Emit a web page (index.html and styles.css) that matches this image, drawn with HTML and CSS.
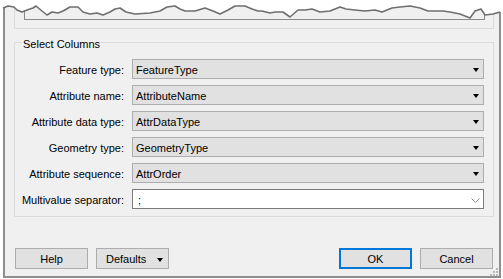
FILE: index.html
```html
<!DOCTYPE html>
<html>
<head>
<meta charset="utf-8">
<link rel="stylesheet" href="styles.css">
</head>
<body>
<div class="window">
  <div class="prev"><div class="prev-inner"></div></div>
  <div class="group">
    <div class="group-title">Select Columns</div>
    <div class="fields">
      <div class="lbl">Feature type:</div>
      <div class="combo"><span class="val">FeatureType</span><span class="arrow"></span></div>
      <div class="lbl">Attribute name:</div>
      <div class="combo"><span class="val">AttributeName</span><span class="arrow"></span></div>
      <div class="lbl">Attribute data type:</div>
      <div class="combo"><span class="val">AttrDataType</span><span class="arrow"></span></div>
      <div class="lbl">Geometry type:</div>
      <div class="combo"><span class="val">GeometryType</span><span class="arrow"></span></div>
      <div class="lbl">Attribute sequence:</div>
      <div class="combo"><span class="val">AttrOrder</span><span class="arrow"></span></div>
      <div class="lbl">Multivalue separator:</div>
      <div class="combo edit"><span class="val">;</span>
        <svg class="chev" width="9" height="5" viewBox="0 0 9 5"><path d="M0.5 0.5 L4.5 4.5 L8.5 0.5" fill="none" stroke="#8a8a8a" stroke-width="1"/></svg>
      </div>
    </div>
  </div>
  <div class="buttons">
    <button class="btn">Help</button>
    <button class="btn split"><span>Defaults</span><span class="arrow"></span></button>
    <div class="spacer"></div>
    <button class="btn default">OK</button>
    <button class="btn">Cancel</button>
  </div>
  <svg class="grip" width="9" height="9" viewBox="0 0 9 9">
    <rect x="7" y="1" width="2" height="2" fill="#b8b8b8"/>
    <rect x="4" y="4" width="2" height="2" fill="#b8b8b8"/>
    <rect x="7" y="4" width="2" height="2" fill="#b8b8b8"/>
    <rect x="1" y="7" width="2" height="2" fill="#b8b8b8"/>
    <rect x="4" y="7" width="2" height="2" fill="#b8b8b8"/>
    <rect x="7" y="7" width="2" height="2" fill="#b8b8b8"/>
  </svg>
</div>
<svg class="torn" width="503" height="24" viewBox="0 0 503 24">
  <path d="M0 0 L503 0 L503 12 L500 12 L493 14 L485 15 L481 9 L475 11 L470 18 L460 14 L450 12 L443 11 L435 11 L428 11 L420 8 L410 6 L400 7 L392 8 L382 12 L375 10 L365 11 L355 10 L346 9 L340 7 L330 11 L320 12 L312 9 L305 10 L298 10 L290 17 L283 12 L275 12 L270 13 L262 11 L258 11 L252 9 L245 6 L235 6 L228 10 L220 14 L213 11 L205 8 L195 11 L185 11 L180 9 L175 6 L167 7 L160 11 L150 13 L135 14 L126 12 L120 8 L115 9 L110 12 L103 15 L97 13 L90 14 L83 12 L78 7 L70 7 L63 11 L58 13 L52 12 L47 15 L42 11 L36 6 L33 8 L27 10 L22 12 L17 10 L14 7 L8 6 L3 8 L0 8 Z" fill="#ffffff"/>
  <path d="M3 8 L8 6 L14 7 L17 10 L22 12 L27 10 L33 8 L36 6 L42 11 L47 15 L52 12 L58 13 L63 11 L70 7 L78 7 L83 12 L90 14 L97 13 L103 15 L110 12 L115 9 L120 8 L126 12 L135 14 L150 13 L160 11 L167 7 L175 6 L180 9 L185 11 L195 11 L205 8 L213 11 L220 14 L228 10 L235 6 L245 6 L252 9 L258 11 L262 11 L270 13 L275 12 L283 12 L290 17 L298 10 L305 10 L312 9 L320 12 L330 11 L340 7 L346 9 L355 10 L365 11 L375 10 L382 12 L392 8 L400 7 L410 6 L420 8 L428 11 L435 11 L443 11 L450 12 L460 14 L470 18 L475 11 L481 9 L485 15 L493 14 L500 12" fill="none" stroke="#6f6f6f" stroke-width="1.6" stroke-linejoin="round"/>
</svg>
</body>
</html>
```
FILE: styles.css
```css
html, body {
  margin: 0;
  padding: 0;
  background: #ffffff;
}
body {
  position: relative;
  width: 503px;
  height: 279px;
  overflow: hidden;
  font-family: "Liberation Sans", Arial, sans-serif;
  font-size: 11px;
  color: #000;
}
.window {
  position: relative;
  box-sizing: border-box;
  margin-left: 3px;
  width: 498px;
  height: 278px;
  background: #f0f0f0;
  border-left: 2px solid #8e8e8e;
  border-right: 2px solid #8e8e8e;
  border-bottom: 2px solid #8e8e8e;
  display: flex;
  flex-direction: column;
}
.prev {
  margin: 0 5px 0 9px;
  height: 28px;
  border-left: 1px solid #dcdcdc;
  border-right: 1px solid #dcdcdc;
  border-bottom: 1px solid #dcdcdc;
  flex: none;
}
.prev-inner {
  margin: 0 8px 0 9px;
  height: 19px;
  border-left: 1px solid #8a8a8a;
  border-right: 1px solid #8a8a8a;
  border-bottom: 1px solid #8a8a8a;
}
.group {
  margin: 13px 5px 0 9px;
  border: 1px solid #dcdcdc;
  padding: 0 9px 7px 0;
  flex: none;
}
.group-title {
  margin: -5px 0 0 7px;
  padding: 0 1px;
  width: fit-content;
  background: #f0f0f0;
  line-height: 13px;
  height: 13px;
}
.fields {
  margin-top: 8px;
  display: grid;
  grid-template-columns: 109px 1fr;
  column-gap: 8px;
  row-gap: 6px;
  grid-auto-rows: 20px;
}
.lbl {
  text-align: right;
  white-space: nowrap;
  line-height: 18px;
  padding-top: 2px;
}
.combo {
  box-sizing: border-box;
  height: 20px;
  border: 1px solid #adadad;
  background: #e1e1e1;
  display: flex;
  align-items: center;
  padding: 0 4px 0 3px;
}
.combo .val {
  flex: 1;
  line-height: 16px;
  padding-top: 2px;
}
.arrow {
  width: 0;
  height: 0;
  border-left: 3.5px solid transparent;
  border-right: 3.5px solid transparent;
  border-top: 4px solid #000;
  margin-top: 1px;
}
.combo.edit {
  background: #ffffff;
  border-color: #7a7a7a;
  padding-left: 5px;
  padding-right: 3px;
}
.chev {
  display: block;
  margin-top: 2px;
}
.buttons {
  margin: 31px 6px 0 10px;
  display: flex;
  gap: 8px;
  flex: none;
}
.spacer {
  flex: 1;
}
.btn {
  box-sizing: border-box;
  width: 73px;
  height: 21px;
  margin: 0;
  padding: 1px 0 0;
  border: 1px solid #adadad;
  background: #e1e1e1;
  font-family: "Liberation Sans", Arial, sans-serif;
  font-size: 11px;
  color: #000;
  line-height: 17px;
  border-radius: 0;
}
.btn.default {
  border: 2px solid #0078d7;
}
.btn.split {
  display: flex;
  align-items: center;
  padding: 1px 5px 0 9px;
}
.btn.split span:first-child {
  flex: 1;
  text-align: left;
}
.grip {
  position: absolute;
  right: 1px;
  bottom: 0;
}
.torn {
  position: absolute;
  left: 0;
  top: 0;
}
```
